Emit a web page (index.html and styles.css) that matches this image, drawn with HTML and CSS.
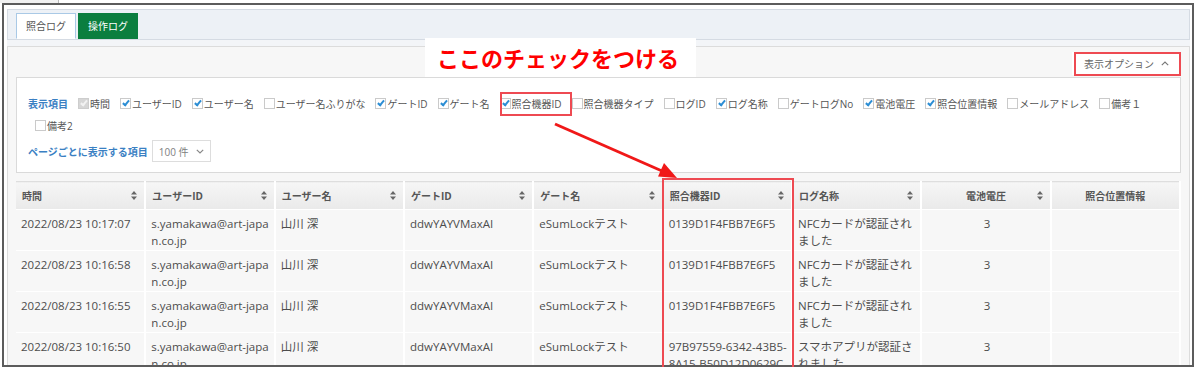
FILE: index.html
```html
<!DOCTYPE html>
<html lang="ja">
<head>
<meta charset="utf-8">
<title>照合ログ</title>
<link rel="stylesheet" href="styles.css">
</head>
<body>
<div class="stub"></div>
<div class="frame">
  <div class="tabbar">
    <div class="tab active">照合ログ</div>
    <div class="tab green">操作ログ</div>
  </div>
  <div class="pane">
    <div class="panel">
      <div class="toggle-row">
        <div class="toggle">表示オプション
          <svg class="chev" width="8" height="5" viewBox="0 0 8 5"><path d="M0.8 4.2L4 1L7.2 4.2" fill="none" stroke="#777" stroke-width="1.1"/></svg>
        </div>
      </div>
      <div class="options">
        <div class="cols">
          <span class="opt-label">表示項目</span>
          <span class="item"><span class="cb dis"></span>時間</span>
          <span class="item"><span class="cb on"></span>ユーザーID</span>
          <span class="item"><span class="cb on"></span>ユーザー名</span>
          <span class="item"><span class="cb"></span>ユーザー名ふりがな</span>
          <span class="item"><span class="cb on"></span>ゲートID</span>
          <span class="item"><span class="cb on"></span>ゲート名</span>
          <span class="item"><span class="cb on"></span>照合機器ID</span>
          <span class="item"><span class="cb"></span>照合機器タイプ</span>
          <span class="item"><span class="cb"></span>ログID</span>
          <span class="item"><span class="cb on"></span>ログ名称</span>
          <span class="item"><span class="cb"></span>ゲートログNo</span>
          <span class="item"><span class="cb on"></span>電池電圧</span>
          <span class="item"><span class="cb on"></span>照合位置情報</span>
          <span class="item"><span class="cb"></span>メールアドレス</span>
          <span class="item"><span class="cb"></span>備考１</span>
          <span class="item"><span class="cb"></span>備考2</span>
        </div>
        <div class="perpage">
          <span class="opt-label">ページごとに表示する項目</span>
          <span class="select">100 件
            <svg class="sel-chev" width="8" height="5" viewBox="0 0 8 5"><path d="M0.8 0.8L4 4L7.2 0.8" fill="none" stroke="#888" stroke-width="1.2"/></svg>
          </span>
        </div>
      </div>
      <table class="grid">
        <thead>
          <tr>
            <th>時間<svg class="sort" width="6" height="9" viewBox="0 0 6 9"><path d="M3 0L6 3.6H0Z M3 9L0 5.4H6Z" fill="#666"/></svg></th>
            <th>ユーザーID<svg class="sort" width="6" height="9" viewBox="0 0 6 9"><path d="M3 0L6 3.6H0Z M3 9L0 5.4H6Z" fill="#666"/></svg></th>
            <th>ユーザー名<svg class="sort" width="6" height="9" viewBox="0 0 6 9"><path d="M3 0L6 3.6H0Z M3 9L0 5.4H6Z" fill="#666"/></svg></th>
            <th>ゲートID<svg class="sort" width="6" height="9" viewBox="0 0 6 9"><path d="M3 0L6 3.6H0Z M3 9L0 5.4H6Z" fill="#666"/></svg></th>
            <th>ゲート名<svg class="sort" width="6" height="9" viewBox="0 0 6 9"><path d="M3 0L6 3.6H0Z M3 9L0 5.4H6Z" fill="#666"/></svg></th>
            <th>照合機器ID<svg class="sort" width="6" height="9" viewBox="0 0 6 9"><path d="M3 0L6 3.6H0Z M3 9L0 5.4H6Z" fill="#666"/></svg></th>
            <th>ログ名称<svg class="sort" width="6" height="9" viewBox="0 0 6 9"><path d="M3 0L6 3.6H0Z M3 9L0 5.4H6Z" fill="#666"/></svg></th>
            <th class="c">電池電圧<svg class="sort" width="6" height="9" viewBox="0 0 6 9"><path d="M3 0L6 3.6H0Z M3 9L0 5.4H6Z" fill="#666"/></svg></th>
            <th class="c">照合位置情報</th>
          </tr>
        </thead>
        <tbody>
          <tr>
            <td>2022/08/23 10:17:07</td><td>s.yamakawa@art-japan.co.jp</td><td>山川 深</td><td>ddwYAYVMaxAI</td><td>eSumLockテスト</td><td>0139D1F4FBB7E6F5</td><td>NFCカードが認証されました</td><td class="c">3</td><td></td>
          </tr>
          <tr>
            <td>2022/08/23 10:16:58</td><td>s.yamakawa@art-japan.co.jp</td><td>山川 深</td><td>ddwYAYVMaxAI</td><td>eSumLockテスト</td><td>0139D1F4FBB7E6F5</td><td>NFCカードが認証されました</td><td class="c">3</td><td></td>
          </tr>
          <tr>
            <td>2022/08/23 10:16:55</td><td>s.yamakawa@art-japan.co.jp</td><td>山川 深</td><td>ddwYAYVMaxAI</td><td>eSumLockテスト</td><td>0139D1F4FBB7E6F5</td><td>NFCカードが認証されました</td><td class="c">3</td><td></td>
          </tr>
          <tr>
            <td>2022/08/23 10:16:50</td><td>s.yamakawa@art-japan.co.jp</td><td>山川 深</td><td>ddwYAYVMaxAI</td><td>eSumLockテスト</td><td class="hyph">97B97559-6342-43B5-8A15-B50D12D0629C</td><td>スマホアプリが認証されました</td><td class="c">3</td><td></td>
          </tr>
        </tbody>
      </table>
    </div>
  </div>
</div>

<div class="note">ここのチェックをつける</div>
<div class="hl hl-btn"></div>
<div class="hl hl-cb"></div>
<div class="hl hl-col"></div>
<svg class="arrow" width="1197" height="367" viewBox="0 0 1197 367">
  <line x1="555" y1="124" x2="662" y2="171" stroke="#f01818" stroke-width="3"/>
  <polygon points="677,178 658,176.5 664,163" fill="#f01818"/>
</svg>
</body>
</html>
```

FILE: styles.css
```css
html, body {
  margin: 0;
  padding: 0;
}
body {
  position: relative;
  width: 1197px;
  height: 367px;
  overflow: hidden;
  background: #fff;
  font-family: "Open Sans", "Noto Sans CJK JP", sans-serif;
  color: #555;
}
.stub {
  width: 58px;
  height: 3px;
  background: #f1f1f1;
  border-right: 1px solid #b8b8b8;
}
.frame {
  margin-left: 2px;
  width: 1192px;
  height: 364px;
  box-sizing: border-box;
  border: 2px solid #5c5c5c;
  padding: 4px 2px 0 3px;
  overflow: hidden;
  background: #fff;
}
.tabbar {
  display: flex;
  gap: 2px;
  height: 31px;
  box-sizing: border-box;
  border: 1px solid #d5dbe3;
  background: #edf1f6;
  padding: 3px 0 0 8px;
}
.tab {
  height: 26px;
  box-sizing: border-box;
  padding: 0 9px;
  font-size: 10px;
  line-height: 24px;
  border: 1px solid transparent;
}
.tab.active {
  background: #fff;
  border-color: #a9c9e6;
  border-bottom-color: #fff;
  color: #555;
}
.tab.green {
  background: #0b7e3f;
  border-color: #0b7e3f;
  color: #fff;
}
.pane {
  background: #f3f5f8;
  padding-top: 6px;
}
.panel {
  background: #f7f7f7;
  border: 1px solid #dcdcdc;
  padding: 5px 8px 0 8px;
  height: 330px;
}
.toggle-row {
  display: flex;
  justify-content: flex-end;
  padding-right: 1px;
}
.toggle {
  height: 23px;
  display: flex;
  align-items: center;
  gap: 7px;
  padding: 0 11px 0 12px;
  background: #fff;
  font-size: 10px;
  color: #666;
}
.chev {
  display: block;
}
.options {
  margin-top: 2px;
  background: #fff;
  border: 1px solid #dadada;
  padding: 14px 11px 10px;
}
.cols {
  display: flex;
  flex-wrap: wrap;
  align-items: center;
}
.cols > span {
  height: 22px;
  display: flex;
  align-items: center;
}
.opt-label {
  color: #3a80c3;
  font-weight: bold;
  font-size: 10px;
  margin-right: 3px;
}
.item {
  font-size: 10px;
  color: #555;
  margin: 0 3px 0 7px;
  white-space: nowrap;
}
.cb {
  width: 11px;
  height: 11px;
  box-sizing: border-box;
  border: 1px solid #cacaca;
  background: #fff;
  margin-right: 1px;
  position: relative;
  flex: none;
}
.cb.on::after,
.cb.dis::after {
  content: "";
  position: absolute;
  left: 3px;
  top: 0px;
  width: 2px;
  height: 5px;
  border: solid #2b8dd4;
  border-width: 0 2px 2px 0;
  transform: rotate(40deg);
}
.cb.dis {
  background: #d6d6d6;
  border-color: #cdcdcd;
}
.cb.dis::after {
  border-color: #f2f2f2;
}
.perpage {
  margin-top: 4px;
  display: flex;
  align-items: center;
}
.select {
  margin-left: 1px;
  width: 59px;
  height: 22px;
  box-sizing: border-box;
  border: 1px solid #ddd;
  display: flex;
  align-items: center;
  justify-content: space-between;
  padding: 0 6px 0 6px;
  font-size: 10px;
  color: #808080;
}
.grid {
  margin-top: 8px;
  width: 1165px;
  table-layout: fixed;
  border-collapse: collapse;
  border-top: 1px solid #dedede;
}
.grid th {
  position: relative;
  height: 27px;
  padding: 0 6px;
  background: linear-gradient(#f6f6f6, #e9e9e9);
  border-right: 2px solid #fff;
  border-bottom: 1px solid #fff;
  font-size: 10px;
  font-weight: bold;
  color: #555;
  text-align: left;
  white-space: nowrap;
}
.grid th.c {
  text-align: center;
}
.sort {
  position: absolute;
  right: 7px;
  top: 9px;
}
.grid td {
  background: #f7f7f7;
  border-right: 2px solid #fff;
  border-bottom: 1px solid #fff;
  vertical-align: top;
  padding: 5px 3px 1px 5px;
  font-size: 11.5px;
  line-height: 17px;
  color: #4d4d4d;
  word-break: break-all;
  height: 34px;
}
.grid td.hyph {
  word-break: normal;
  overflow-wrap: anywhere;
}
.grid td.c {
  text-align: center;
}
.note {
  position: absolute;
  left: 425px;
  top: 38px;
  width: 271px;
  height: 39px;
  box-sizing: border-box;
  padding-left: 12px;
  background: #fff;
  color: #ff0000;
  font-family: "Noto Sans CJK JP", sans-serif;
  font-weight: bold;
  font-size: 22px;
  line-height: 39px;
  white-space: nowrap;
}
.hl {
  position: absolute;
  box-sizing: border-box;
  border: 2px solid #ee4a52;
}
.hl-btn {
  left: 1074px;
  top: 52px;
  width: 107px;
  height: 24px;
}
.hl-cb {
  left: 500px;
  top: 92px;
  width: 72px;
  height: 24px;
}
.hl-col {
  left: 662px;
  top: 178px;
  width: 132px;
  height: 200px;
}
.arrow {
  position: absolute;
  left: 0;
  top: 0;
  pointer-events: none;
}
```
